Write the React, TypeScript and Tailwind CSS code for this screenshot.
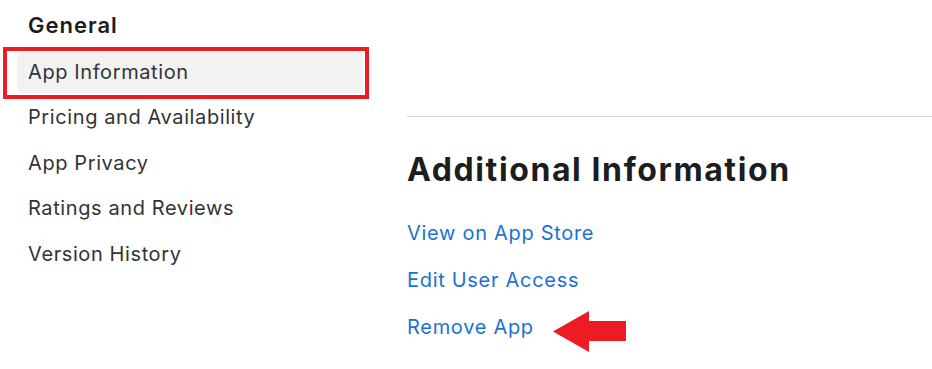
import React from "react";

const navItems = [
  "App Information",
  "Pricing and Availability",
  "App Privacy",
  "Ratings and Reviews",
  "Version History",
];

const links = ["View on App Store", "Edit User Access", "Remove App"];

export default function App() {
  return (
    <div
      className="relative w-[932px] h-[369px] overflow-hidden bg-white flex"
      style={{ fontFamily: "Inter, 'Noto Sans', sans-serif" }}
    >
      <aside className="w-[407px] shrink-0 pl-[17px] pr-[44px]">
        <h2 className="pl-[11px] h-[50px] pt-[9px] text-[22px] leading-[32px] font-semibold tracking-[1px] text-[#1d1d1f]">
          General
        </h2>
        <ul className="flex flex-col gap-[4.5px] mt-[2px]">
          {navItems.map((item, i) => (
            <li
              key={item}
              className={`h-[41px] flex items-center pl-[11px] pb-[2px] rounded-l-[6px] text-[20px] tracking-[0.6px] text-[#333336] ${
                i === 0 ? "bg-[#f2f2f2]" : ""
              }`}
            >
              {item}
            </li>
          ))}
        </ul>
      </aside>

      <main className="flex-1 pt-[116px]">
        <div className="h-px bg-[#d6d6d6]" />
        <h1 className="mt-[35px] text-[32px] leading-[36px] font-bold text-[#1d1d1f] tracking-[1.6px]">
          Additional Information
        </h1>
        <div className="mt-[31px] flex flex-col gap-[19px]">
          {links.map((l) => (
            <div key={l} className="flex items-center h-[28px]">
              <a className="text-[20px] leading-[28px] tracking-[0.7px] text-[#1a73d1]">{l}</a>
              {l === "Remove App" && (
                <svg
                  width="74"
                  height="41"
                  viewBox="0 0 74 41"
                  className="ml-[19px] mt-[8px]"
                >
                  <polygon
                    points="0,20.5 36,0 36,10 73,10 73,30 36,30 36,41"
                    fill="#ed1c24"
                  />
                </svg>
              )}
            </div>
          ))}
        </div>
      </main>

      <div className="absolute left-[3px] top-[47px] w-[366px] h-[52px] border-4 border-[#ed1c24]" />
    </div>
  );
}
